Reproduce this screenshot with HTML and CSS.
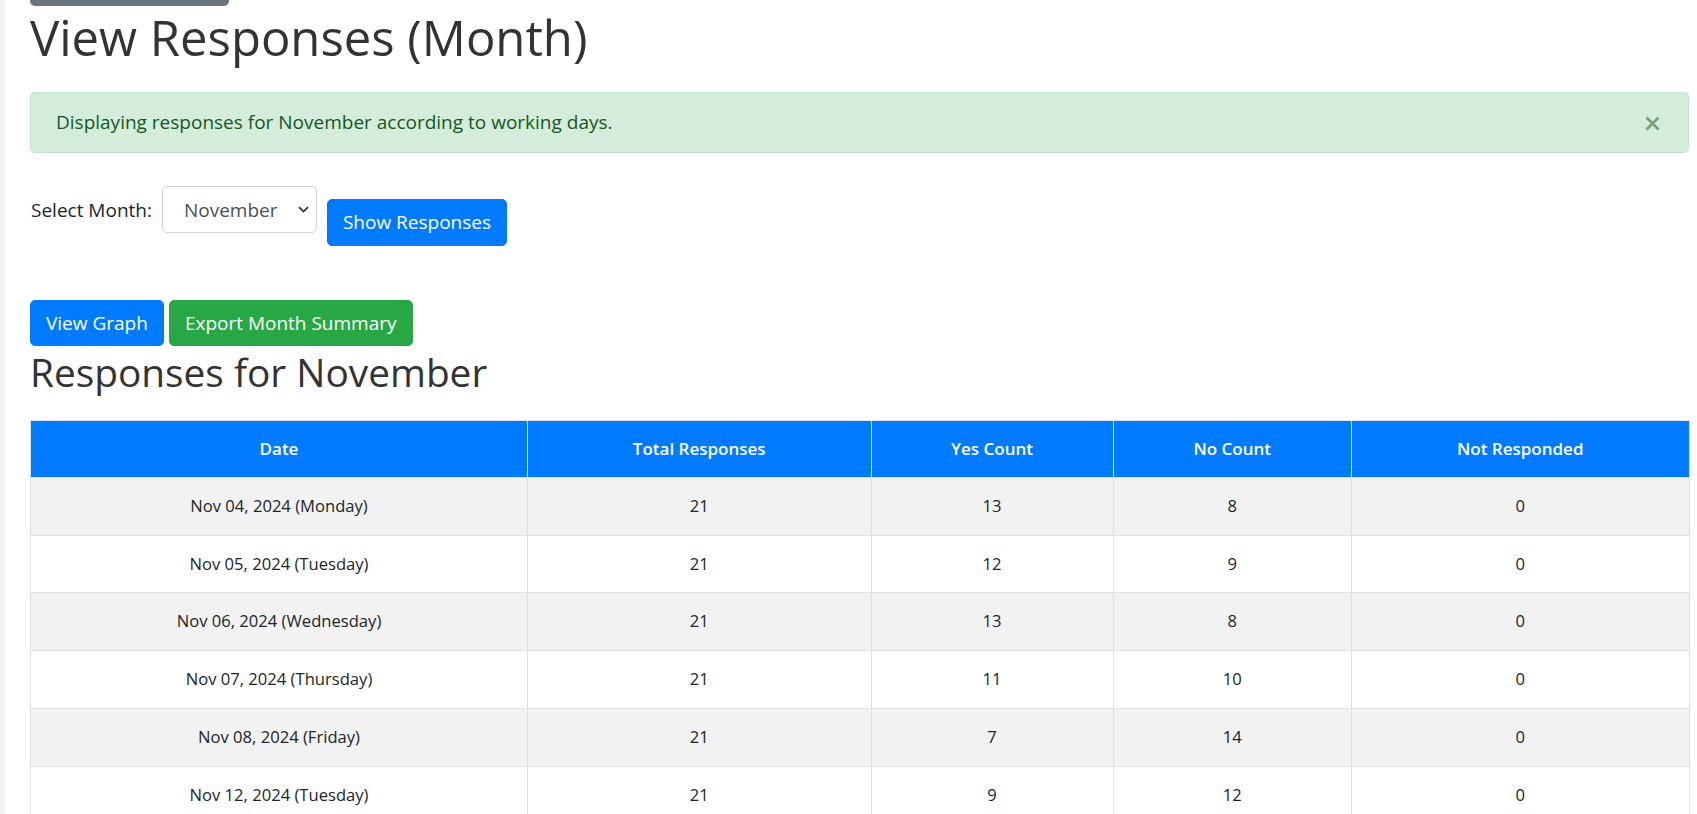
FILE: index.html
```html
<!DOCTYPE html>
<html lang="en">
<head>
<meta charset="utf-8">
<title>View Responses (Month)</title>
<link rel="stylesheet" href="styles.css">
</head>
<body>
<div class="page">
  <div class="back-btn"></div>
  <h1 class="title">View Responses (Month)</h1>

  <div class="alert">
    <span class="alert-text">Displaying responses for November according to working days.</span>
    <button class="close" type="button" aria-label="Close">
      <svg width="15" height="15" viewBox="0 0 15 15"><path d="M1.5 1.5 L13.5 13.5 M13.5 1.5 L1.5 13.5" stroke="currentColor" stroke-width="2.6" stroke-linecap="butt" fill="none"/></svg>
    </button>
  </div>

  <form class="month-form">
    <label class="month-label" for="month">Select Month:</label>
    <span class="select-wrap">
      <select id="month" class="month-select">
        <option>November</option>
      </select>
      <svg class="chev" width="11" height="7" viewBox="0 0 11 7"><path d="M1 1.2 L5.5 5.6 L10 1.2" stroke="#333" stroke-width="1.8" fill="none"/></svg>
    </span>
    <button type="button" class="btn btn-primary btn-show">Show Responses</button>
  </form>

  <div class="actions">
    <button type="button" class="btn btn-primary">View Graph</button>
    <button type="button" class="btn btn-success">Export Month Summary</button>
  </div>

  <h2 class="subtitle">Responses for November</h2>

  <table class="resp-table">
    <colgroup>
      <col class="c-date"><col class="c-total"><col class="c-yes"><col class="c-no"><col class="c-not">
    </colgroup>
    <thead>
      <tr><th>Date</th><th>Total Responses</th><th>Yes Count</th><th>No Count</th><th>Not Responded</th></tr>
    </thead>
    <tbody>
      <tr><td>Nov 04, 2024 (Monday)</td><td>21</td><td>13</td><td>8</td><td>0</td></tr>
      <tr><td>Nov 05, 2024 (Tuesday)</td><td>21</td><td>12</td><td>9</td><td>0</td></tr>
      <tr><td>Nov 06, 2024 (Wednesday)</td><td>21</td><td>13</td><td>8</td><td>0</td></tr>
      <tr><td>Nov 07, 2024 (Thursday)</td><td>21</td><td>11</td><td>10</td><td>0</td></tr>
      <tr><td>Nov 08, 2024 (Friday)</td><td>21</td><td>7</td><td>14</td><td>0</td></tr>
      <tr><td>Nov 12, 2024 (Tuesday)</td><td>21</td><td>9</td><td>12</td><td>0</td></tr>
    </tbody>
  </table>
</div>
</body>
</html>
```

FILE: styles.css
```css
html, body {
  margin: 0;
  padding: 0;
  background: #fff;
}

body {
  font-family: "Open Sans", "Noto Sans", "Liberation Sans", sans-serif;
  font-size: 19px;
  line-height: 1.5;
  color: #212529;
}

.page {
  border-left: 5px solid #f1f2f4;
  padding: 0 8.5px 0 25px;
  min-height: 814px;
  box-sizing: border-box;
}

.back-btn {
  width: 199px;
  height: 6px;
  background: #6c757d;
  border-radius: 0 0 5px 5px;
}

.title {
  margin: 1px 0 24px;
  font-size: 49px;
  font-weight: 500;
  line-height: 61px;
  color: #333;
}

.alert {
  display: flex;
  align-items: center;
  justify-content: space-between;
  height: 61px;
  box-sizing: border-box;
  padding: 0 0 0 25px;
  background: #d4edda;
  border: 1px solid #c3e6cb;
  border-radius: 5px;
  color: #155724;
  line-height: 29px;
}

.close {
  display: flex;
  align-items: center;
  justify-content: center;
  width: 15px;
  height: 15px;
  padding: 0;
  margin: 2px 28px 0 0;
  border: 0;
  background: transparent;
  color: #155724;
  opacity: 0.5;
  cursor: pointer;
}

.month-form {
  display: flex;
  align-items: flex-start;
  margin: 33px 0 0;
}

.month-label {
  margin: 9px 10px 0 1px;
  line-height: 30px;
}

.select-wrap {
  position: relative;
  display: block;
}

.month-select {
  -webkit-appearance: none;
  appearance: none;
  width: 155px;
  height: 47px;
  box-sizing: border-box;
  padding: 0 0 0 21px;
  margin: 0;
  border: 1px solid #ced4da;
  border-radius: 5px;
  background: #fff;
  font-family: inherit;
  font-size: 19px;
  color: #495057;
}

.chev {
  position: absolute;
  right: 8px;
  top: 20px;
  pointer-events: none;
}

.btn {
  display: inline-block;
  box-sizing: border-box;
  height: 46.5px;
  padding: 0 15px;
  border: 1px solid transparent;
  border-radius: 5px;
  font-family: inherit;
  font-size: 19px;
  line-height: 44px;
  color: #fff;
  cursor: pointer;
  white-space: nowrap;
}

.btn-primary {
  background: #007bff;
  border-color: #007bff;
}

.btn-success {
  background: #28a745;
  border-color: #28a745;
}

.btn-show {
  margin: 13px 0 0 10px;
}

.actions {
  display: flex;
  gap: 5px;
  margin-top: 54px;
}

.subtitle {
  margin: 1.5px 0 24px;
  font-size: 38.8px;
  font-weight: 500;
  line-height: 48px;
  color: #333;
}

.resp-table {
  width: 100%;
  table-layout: fixed;
  border-collapse: collapse;
  font-size: 16.6px;
  line-height: 26.8px;
}

.c-date { width: 497px; }
.c-total { width: 343.5px; }
.c-yes { width: 242px; }
.c-no { width: 238.5px; }
.c-not { width: 337.5px; }

.resp-table th,
.resp-table td {
  padding: 15px;
  text-align: center;
  border: 1px solid #dee2e6;
}

.resp-table th {
  background: #007bff;
  color: #fff;
  font-size: 17px;
  font-weight: 600;
  line-height: 26.3px;
}

.resp-table tbody tr:nth-child(odd) td {
  background: #f2f2f2;
}

.resp-table tbody tr:nth-child(even) td {
  background: #fff;
}
```
